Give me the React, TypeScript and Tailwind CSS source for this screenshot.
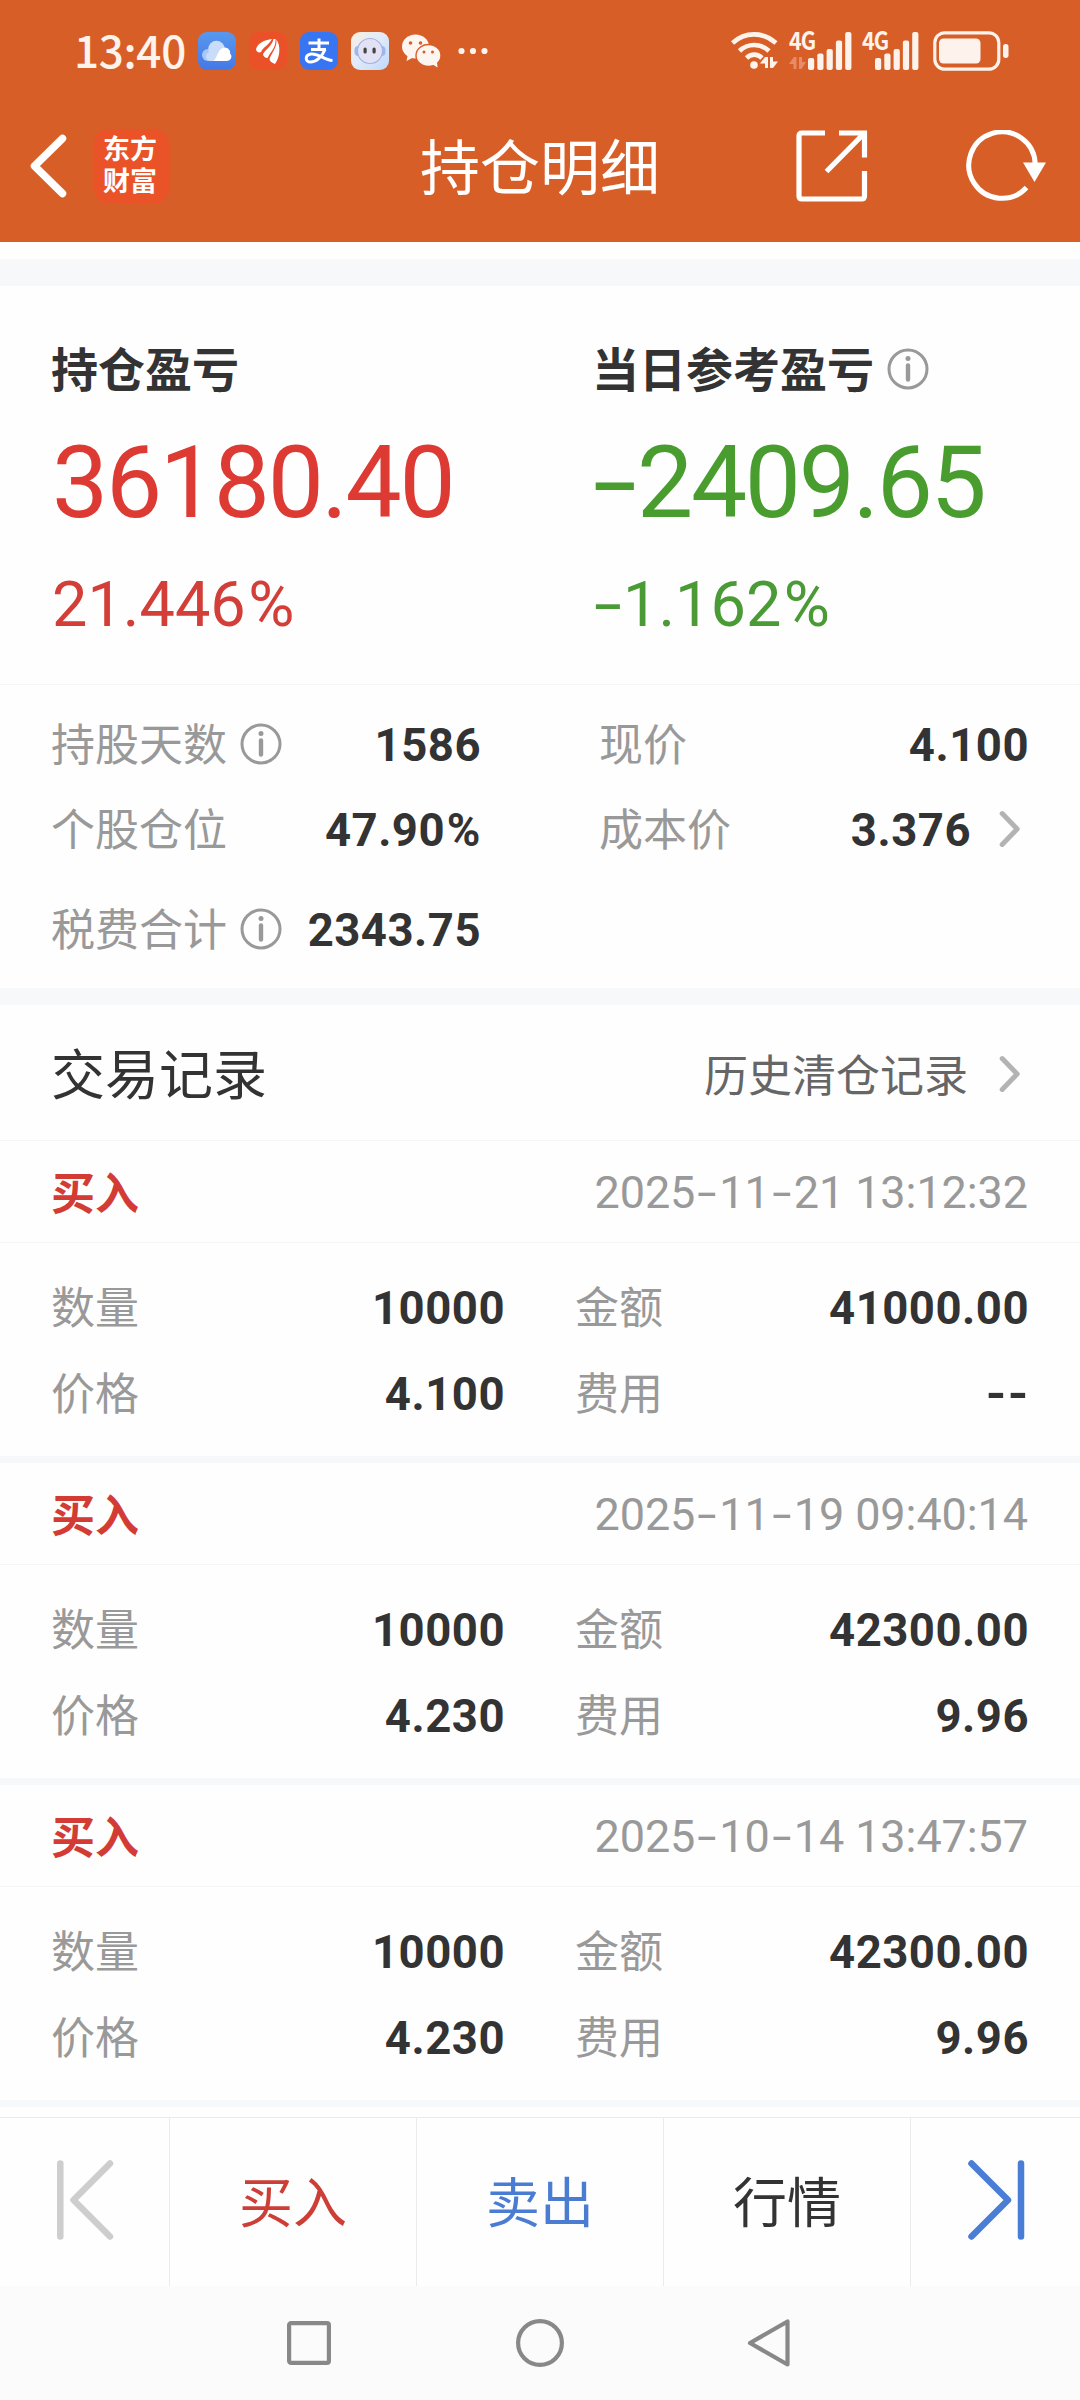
import type { ReactNode } from 'react';

type TradeRecord = {
  side: string;
  time: string;
  quantity: string;
  amount: string;
  price: string;
  fee: string;
};

const records: TradeRecord[] = [
  { side: '买入', time: '2025-11-21 13:12:32', quantity: '10000', amount: '41000.00', price: '4.100', fee: '--' },
  { side: '买入', time: '2025-11-19 09:40:14', quantity: '10000', amount: '42300.00', price: '4.230', fee: '9.96' },
  { side: '买入', time: '2025-10-14 13:47:57', quantity: '10000', amount: '42300.00', price: '4.230', fee: '9.96' },
];

// Numbers are set in Roboto, with hyphens widened to the width of a digit dash
function Num({ value, className, dash }: { value: string; className: string; dash?: string }) {
  return (
    <span className={`font-[Roboto,sans-serif] whitespace-pre leading-none ${className}`}>
      {value.split('').map((ch, i) => {
        if (ch === '-') {
          return <span key={i} className={`inline-block text-center tracking-normal ${dash ?? ''}`}>-</span>;
        }
        if (ch === '%') {
          return <span key={i} className="inline-block pl-[0.04em]">%</span>;
        }
        return ch;
      })}
    </span>
  );
}

function InfoIcon() {
  return (
    <svg className="w-[42px] h-[42px] shrink-0" viewBox="0 0 42 42" fill="none" stroke="#999" strokeWidth="3">
      <circle cx="21" cy="21" r="19" />
      <circle cx="21" cy="10.5" r="2.5" fill="#999" stroke="none" />
      <path d="M21 17.5V31.5" strokeWidth="4.4" strokeLinecap="round" />
    </svg>
  );
}

function ChevronIcon() {
  return (
    <svg className="w-[22px] h-[38px] shrink-0" viewBox="0 0 22 38" fill="none" stroke="#b3b3b3" strokeWidth="5" strokeLinecap="round" strokeLinejoin="round">
      <path d="M3.2 3.6L18.2 19L3.2 34.4" />
    </svg>
  );
}

function Signal({ data }: { data?: boolean }) {
  const start = data ? 19 : 13;
  const tops = [27, 22.5, 18, 9.5, 1];
  return (
    <div className={`relative h-[39px] ${data ? 'w-[63px] mr-[10px]' : 'w-[57px] mr-[14px]'}`}>
      <span className="absolute left-0 top-0 origin-left scale-x-[0.86] font-['Noto_Sans_CJK_SC',sans-serif] font-bold text-[25px] leading-[17px] tracking-[-1px] text-[#fdf3ec]">4G</span>
      <svg className="block w-full h-full" viewBox={data ? '0 0 63 39' : '0 0 57 39'} fill="#fdf3ec">
        {tops.map((y, i) => (
          <rect key={i} x={start + i * 9.3} y={y} width="6.2" height={39 - y} rx="2" />
        ))}
        {data && <path d="M0 33L5 26H7.5V38H4.5V33ZM10 26H13V31H17L12.5 38H10Z" fill="#e88b68" />}
      </svg>
    </div>
  );
}

function StatusBar() {
  return (
    <div className="flex h-[101px] items-center pl-[74px] text-[#fdf3ec]">
      <span className="w-[112px] pb-[3px] font-['Noto_Sans_CJK_SC',sans-serif] text-[44px] font-medium leading-none tracking-[-0.3px]">13:40</span>
      <svg className="ml-[12px] w-[38px] h-[38px]" viewBox="0 0 38 38">
        <defs>
          <linearGradient id="cloudBg" x1="0" y1="0" x2="0" y2="1">
            <stop offset="0" stopColor="#5898ee" />
            <stop offset="1" stopColor="#4478e6" />
          </linearGradient>
        </defs>
        <rect width="38" height="38" rx="9" fill="url(#cloudBg)" />
        <circle cx="10" cy="23" r="6" fill="#a9c8f8" />
        <circle cx="18.5" cy="17" r="8.3" fill="#c9dcfa" />
        <rect x="8" y="20" width="22" height="9" rx="4.5" fill="#c9dcfa" />
        <path d="M15 29C19 28 19 17 26 15.5C30 15 33 19 32 21.5C35 24 33 29 28.5 29Z" fill="#fff" />
      </svg>
      <svg className="ml-[13px] w-[38px] h-[38px]" viewBox="0 0 38 38">
        <rect width="38" height="38" rx="9" fill="#ea5128" />
        <path d="M7 17C9 11 15 8 23 7C20 13 14 15 12 20C10 21 7 20 7 17Z" fill="#fff" />
        <path d="M14 22C17 17 23 14 24.5 7H26.5C27 16 22 19 18.5 26C16 26 14 24 14 22Z" fill="#fff" />
        <path d="M20.5 27C23 20 28 16 27.5 7.5C32 14 31 25 26 32C23 31 20.5 29 20.5 27Z" fill="#fff" />
      </svg>
      <svg className="ml-[13px] w-[38px] h-[38px]" viewBox="0 0 38 38" fill="none" stroke="#fff" strokeWidth="3">
        <rect width="38" height="38" rx="9" fill="#3875f2" stroke="none" />
        <path d="M8.5 11H29M19 6.5V17.5M11 17.5H26" />
        <path d="M25 17.5C22 25 16 30 10.5 30C5 30 4.5 23 11 22C18 21 24 28 32.5 28.5" />
      </svg>
      <svg className="ml-[13px] w-[38px] h-[38px]" viewBox="0 0 38 38">
        <defs>
          <linearGradient id="botBg" x1="0" y1="0" x2="1" y2="1">
            <stop offset="0" stopColor="#fbefe0" />
            <stop offset=".5" stopColor="#dfeafa" />
            <stop offset="1" stopColor="#bfd8fb" />
          </linearGradient>
        </defs>
        <rect width="38" height="38" rx="9" fill="url(#botBg)" />
        <rect x="3.5" y="14" width="31" height="10" rx="4" fill="#9eb6f0" />
        <circle cx="19" cy="19" r="12.5" fill="#e3e2f5" stroke="#a3b2e6" strokeWidth="1.2" />
        <rect x="12.5" y="15.5" width="3.2" height="6" rx="1.5" fill="#444" />
        <rect x="21.5" y="15.5" width="3.2" height="6" rx="1.5" fill="#444" />
      </svg>
      <svg className="ml-[13px] w-[39px] h-[34px]" viewBox="0 0 39 34">
        <ellipse cx="13.5" cy="12.5" rx="13.5" ry="12" fill="#fdf5f0" />
        <path d="M6 20L4.5 27L12 23Z" fill="#fdf5f0" />
        <circle cx="8.5" cy="9" r="1.8" fill="#d75f27" />
        <circle cx="18.5" cy="9" r="1.8" fill="#d75f27" />
        <ellipse cx="26.5" cy="21.5" rx="12.5" ry="11" fill="#fdf5f0" stroke="#d75f27" strokeWidth="1.4" />
        <path d="M30 30L35.5 33.5L35 28Z" fill="#fdf5f0" />
        <circle cx="22" cy="18" r="1.5" fill="#d75f27" />
        <circle cx="30.5" cy="18" r="1.5" fill="#d75f27" />
      </svg>
      <svg className="ml-[17px] w-[30px] h-[8px]" viewBox="0 0 30 8" fill="#fdf3ec">
        <circle cx="3.5" cy="4" r="3.1" />
        <circle cx="15" cy="4" r="3.1" />
        <circle cx="26.5" cy="4" r="3.1" />
      </svg>
      <div className="ml-auto mr-[71px] flex items-center">
        <svg className="mr-[10px] w-[48px] h-[39px]" viewBox="0 0 48 39" fill="none" stroke="#fdf3ec" strokeWidth="4.6">
          <path d="M1.5 12C14 .5 32 .5 45 12" />
          <path d="M8.5 20C16.5 12 30 12 38 20" />
          <path d="M15.5 27C20 22.5 26.5 22.5 31 27" />
          <circle cx="23" cy="34" r="3.8" fill="#fdf3ec" stroke="none" />
          <path d="M29 32.5L34 26H37V37H34V32.5ZM39 26H42V30.5H47L42 37H39Z" fill="#fdf3ec" stroke="none" />
        </svg>
        <Signal data />
        <Signal />
        <svg className="w-[76px] h-[40px]" viewBox="0 0 76 40" fill="#fdf3ec">
          <rect x="1.8" y="1.8" width="64" height="36.4" rx="10" fill="none" stroke="#fdf3ec" strokeWidth="3.2" />
          <rect x="6" y="7.5" width="41.5" height="25" rx="4.5" />
          <rect x="70" y="13" width="5.5" height="14" rx="2.7" />
        </svg>
      </div>
    </div>
  );
}

function TitleBar() {
  return (
    <div className="grid h-[130px] grid-cols-[1fr_auto_1fr] items-center">
      <div className="flex items-center pl-[28px]">
        <svg className="w-[40px] h-[64px]" viewBox="0 0 40 64" fill="none" stroke="#fff" strokeWidth="7.5" strokeLinecap="round" strokeLinejoin="round">
          <path d="M34.5 4.5L6.5 32L34.5 59.5" />
        </svg>
        <div className="ml-[26px] h-[75px] w-[75px] rounded-[15px] bg-[#ea5328] pr-[3px] pt-[5px] text-center font-['Liberation_Sans','Noto_Sans_CJK_SC',sans-serif] text-[27px] font-bold leading-[32px] text-white">
          东方<br />财富
        </div>
      </div>
      <h1 className="pb-[5px] text-[60px] leading-[60px] text-white">持仓明细</h1>
      <div className="flex items-center justify-end pr-[33px]">
        <svg className="w-[72px] h-[72px]" viewBox="0 0 72 72" fill="none" stroke="#fff" strokeWidth="5.2">
          <path d="M29 3H6Q3 3 3 6V66Q3 69 6 69H65.5Q68.5 69 68.5 66V41" />
          <path d="M43 3H68.5V27.5M68.5 3L30.5 41.5" />
        </svg>
        <svg className="ml-[97px] w-[82px] h-[72px]" viewBox="0 0 82 72">
          <path d="M61.5 57.5A33.2 33.2 0 1 1 70.2 34" fill="none" stroke="#fff" strokeWidth="5" />
          <path d="M58 32.5H81L69.5 52Z" fill="#fff" />
        </svg>
      </div>
    </div>
  );
}

function Label({ children }: { children: ReactNode }) {
  return <span className="pb-[4px] text-[44px] leading-[44px] text-[#999]">{children}</span>;
}

function Value({ children }: { children: string }) {
  return (
    <Num
      value={children}
      className="pt-[3px] text-[45.5px] font-bold tracking-[0.5px] -mr-[1px] text-[#333]"
      dash="w-[22px] scale-x-[1.15]"
    />
  );
}

function Summary() {
  return (
    <section>
      <div className="grid h-[398px] grid-cols-[541px_1fr] pl-[51px]">
        <div className="flex flex-col pt-[57px]">
          <h2 className="text-[47px] font-bold leading-[47px] text-[#333]">持仓盈亏</h2>
          <Num value="36180.40" className="ml-px mt-[43px] text-[100px] tracking-[-2.3px] text-[#dc3a32]" />
          <Num value="21.446%" className="ml-px mt-[40px] text-[63px] text-[#d33f38]" />
        </div>
        <div className="flex flex-col pt-[57px]">
          <div className="flex h-[47px] items-center gap-[13px]">
            <h2 className="text-[47px] font-bold leading-[47px] text-[#333]">当日参考盈亏</h2>
            <div className="pt-[4px]">
              <InfoIcon />
            </div>
          </div>
          <Num value="-2409.65" className="ml-px mt-[43px] text-[100px] tracking-[-2.3px] text-[#489d2e]" dash="w-[44px] scale-x-[1.6]" />
          <Num value="-1.162%" className="ml-px mt-[40px] text-[63px] text-[#4a9a36]" dash="w-[30px] scale-x-[1.6]" />
        </div>
      </div>
      <div className="grid h-[304px] grid-cols-[429px_429px] content-start gap-x-[119px] border-t border-[#f5f6f8] pl-[51px] pt-[16px]">
        <div className="flex h-[86px] items-center justify-between">
          <div className="flex items-center gap-[13px]">
            <Label>持股天数</Label>
            <InfoIcon />
          </div>
          <Value>1586</Value>
        </div>
        <div className="flex h-[86px] items-center justify-between">
          <Label>现价</Label>
          <Value>4.100</Value>
        </div>
        <div className="flex h-[84px] items-center justify-between">
          <Label>个股仓位</Label>
          <Value>47.90%</Value>
        </div>
        <div className="flex h-[84px] items-center">
          <Label>成本价</Label>
          <div className="ml-auto mr-[7px] flex items-center gap-[29px]">
            <Value>3.376</Value>
            <ChevronIcon />
          </div>
        </div>
        <div className="flex h-[116px] items-center justify-between">
          <div className="flex items-center gap-[13px]">
            <Label>税费合计</Label>
            <InfoIcon />
          </div>
          <Value>2343.75</Value>
        </div>
      </div>
    </section>
  );
}

function RecordCard({ record }: { record: TradeRecord }) {
  return (
    <article className="h-[322px] border-b-[7px] border-[#f6f8fa]">
      <div className="flex h-[102px] items-center justify-between border-b border-[#f5f6f8] pl-[51px] pr-[52px]">
        <span className="pb-[2px] text-[44px] font-bold leading-[44px] text-[#d33c34]">{record.side}</span>
        <Num value={record.time} className="pt-[2px] text-[45px] tracking-[-0.1px] text-[#999]" dash="w-[24px] scale-x-[1.55]" />
      </div>
      <div className="grid grid-cols-[453px_453px] gap-x-[71px] pl-[51px] pt-[21px]">
        <div className="flex h-[86px] items-center justify-between">
          <Label>数量</Label>
          <Value>{record.quantity}</Value>
        </div>
        <div className="flex h-[86px] items-center justify-between">
          <Label>金额</Label>
          <Value>{record.amount}</Value>
        </div>
        <div className="flex h-[86px] items-center justify-between">
          <Label>价格</Label>
          <Value>{record.price}</Value>
        </div>
        <div className="flex h-[86px] items-center justify-between">
          <Label>费用</Label>
          <Value>{record.fee}</Value>
        </div>
      </div>
    </article>
  );
}

function BottomBar() {
  return (
    <div className="grid h-[169px] grid-cols-[169px_247px_247px_247px_170px] border-t border-[#ebebeb] text-[54px] leading-[54px]">
      <button className="flex items-center pl-[57px] pb-[5px]">
        <svg className="w-[57px] h-[80px]" viewBox="0 0 57 80" fill="none" stroke="#cdcdcd" strokeWidth="6.5" strokeLinecap="round" strokeLinejoin="round">
          <path d="M3.3 3.5V76.5M53 3.5L16.5 40L53 76.5" />
        </svg>
      </button>
      <button className="border-l border-[#ebebeb] pb-[4px] text-[#cc3e36]">买入</button>
      <button className="border-l border-[#ebebeb] pb-[4px] text-[#4a7dd2]">卖出</button>
      <button className="border-l border-[#ebebeb] pb-[4px] text-[#333]">行情</button>
      <button className="flex items-center border-l border-[#ebebeb] pl-[57px] pb-[5px]">
        <svg className="w-[57px] h-[80px]" viewBox="0 0 57 80" fill="none" stroke="#4a7dd6" strokeWidth="6.5" strokeLinecap="round" strokeLinejoin="round">
          <path d="M53 3.5V76.5M3.5 3.5L40 40L3.5 76.5" />
        </svg>
      </button>
    </div>
  );
}

function SystemNav() {
  return (
    <div className="flex h-[114px] items-center justify-center gap-[181px] bg-[#fbfbfc]">
      <svg className="w-[50px] h-[50px]" viewBox="0 0 50 50" fill="none" stroke="#888" strokeWidth="4.2">
        <rect x="5.1" y="5.1" width="39.8" height="39.8" rx="2" />
      </svg>
      <svg className="w-[50px] h-[50px]" viewBox="0 0 50 50" fill="none" stroke="#888" strokeWidth="4.2">
        <circle cx="25" cy="25" r="21.9" />
      </svg>
      <svg className="w-[50px] h-[50px]" viewBox="0 0 50 50" fill="none" stroke="#888" strokeWidth="4.2" strokeLinejoin="round">
        <path d="M41.5 3.5V46.5L4 25Z" />
      </svg>
    </div>
  );
}

export default function App() {
  return (
    <div className="flex h-[2400px] w-[1080px] flex-col overflow-hidden bg-[#fefefe] font-['Noto_Sans_CJK_SC',sans-serif]">
      <header className="h-[242px] bg-[#d75f27]">
        <StatusBar />
        <TitleBar />
      </header>
      <main className="h-[1875px]">
        <div className="mt-[17px] h-[27px] bg-[#f6f8fa]" />
        <Summary />
        <div className="h-[17px] bg-[#f6f8fa]" />
        <div className="flex h-[136px] items-center justify-between border-b border-[#f5f6f8] pl-[51px] pr-[59px]">
          <h2 className="pb-[2px] text-[54px] leading-[54px] text-[#333]">交易记录</h2>
          <div className="flex items-center gap-[31px] pt-[2px]">
            <span className="pb-[2px] text-[44px] leading-[44px] text-[#666]">历史清仓记录</span>
            <ChevronIcon />
          </div>
        </div>
        {records.map((record) => (
          <RecordCard key={record.time} record={record} />
        ))}
      </main>
      <BottomBar />
      <SystemNav />
    </div>
  );
}
